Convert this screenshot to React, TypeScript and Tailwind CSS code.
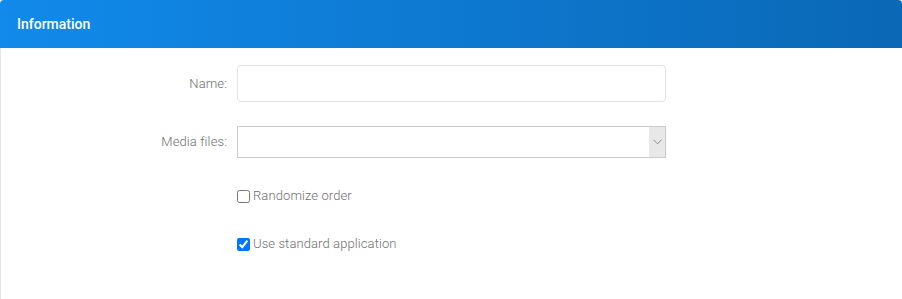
import React from "react";

export default function App() {
  return (
    <div className="w-[902px] h-[299px] bg-white" style={{ fontFamily: "Roboto, 'Liberation Sans', sans-serif" }}>
      <div className="h-12 rounded-t-[4px] bg-linear-to-r from-[#118aeb] to-[#0a68b6] flex items-center pl-[17px]">
        <span className="text-white text-[14px] font-medium">Information</span>
      </div>
      <div className="h-[251px] border-l border-[#e3e3e3] pt-[17px]">
        <div className="flex items-center">
          <label className="w-[226px] text-right text-[13px] font-light tracking-[0.1px] text-[#707070]">Name:</label>
          <input
            type="text"
            className="ml-[10px] w-[429px] h-[37px] rounded-[4px] border border-[#e2e2e2] outline-none px-2"
          />
        </div>
        <div className="flex items-center mt-[24px]">
          <label className="w-[226px] text-right text-[13px] font-light tracking-[0.1px] text-[#707070]">Media files:</label>
          <div className="ml-[10px] w-[429px] h-[32px] border border-[#cbcbcb] flex">
            <div className="flex-1" />
            <div className="w-[16px] bg-[#e8e8e8] flex items-center justify-center">
              <svg width="9" height="6" viewBox="0 0 9 6" fill="none">
                <path d="M0.5 0.8 L4.5 4.8 L8.5 0.8" stroke="#888" strokeWidth="1" />
              </svg>
            </div>
          </div>
        </div>
        <div className="flex items-center ml-[236px] mt-[31px] h-[14px]">
          <input type="checkbox" className="w-[13px] h-[13px] m-0" />
          <span className="ml-[3px] text-[13px] font-light tracking-[0.1px] text-[#707070]">Randomize order</span>
        </div>
        <div className="flex items-center ml-[236px] mt-[34px] h-[14px]">
          <input type="checkbox" defaultChecked className="w-[13px] h-[13px] m-0" />
          <span className="ml-[3px] text-[13px] font-light tracking-[0.1px] text-[#707070]">Use standard application</span>
        </div>
      </div>
    </div>
  );
}
